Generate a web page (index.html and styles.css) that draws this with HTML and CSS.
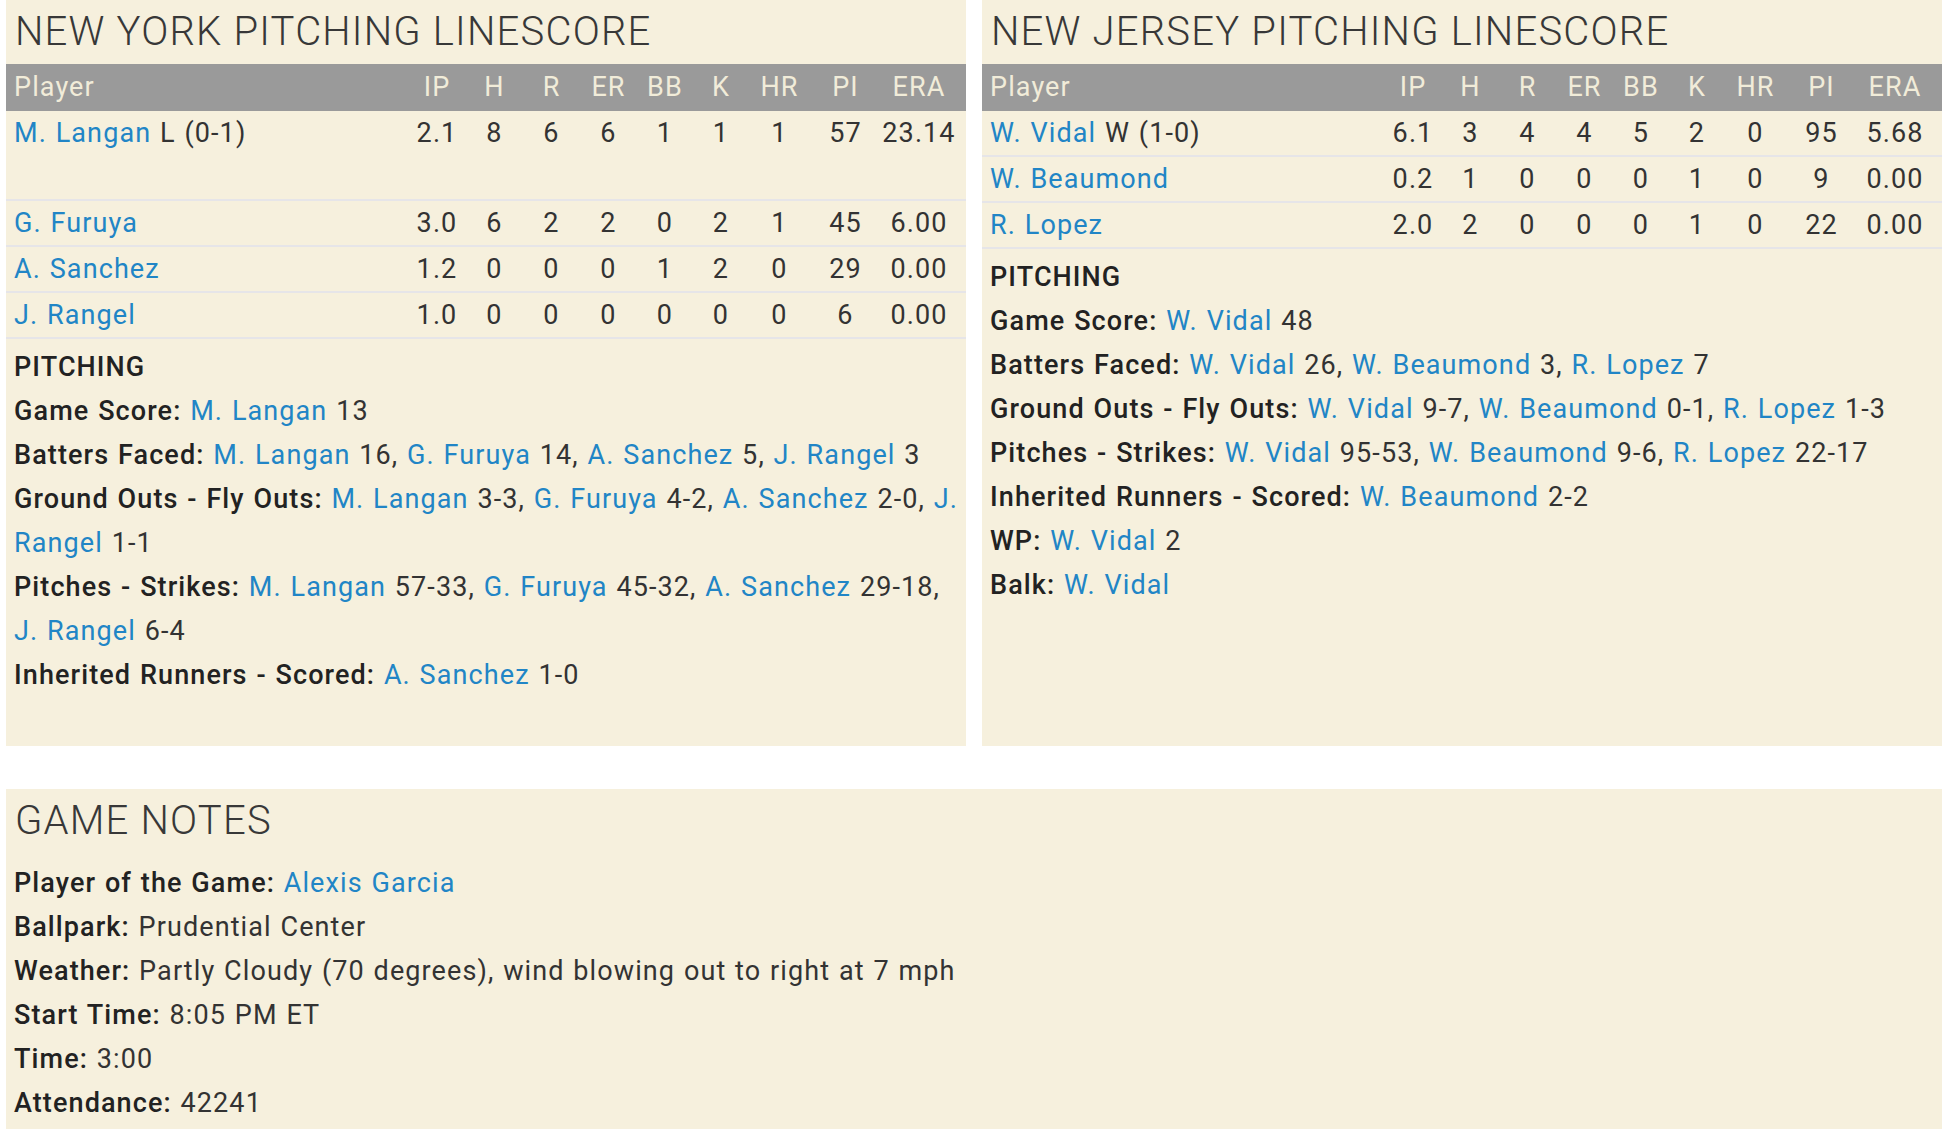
FILE: index.html
```html
<!DOCTYPE html>
<html lang="en">
<head>
<meta charset="utf-8">
<title>Pitching Linescore</title>
<link rel="stylesheet" href="styles.css">
</head>
<body>
<div class="top-row">
  <section class="panel">
    <h2 class="panel-title">NEW YORK PITCHING LINESCORE</h2>
    <table class="linescore">
      <colgroup>
        <col class="c-player"><col class="c-ip"><col class="c-h"><col class="c-r"><col class="c-er"><col class="c-bb"><col class="c-k"><col class="c-hr"><col class="c-pi"><col class="c-era">
      </colgroup>
      <thead>
        <tr><th class="player">Player</th><th>IP</th><th>H</th><th>R</th><th>ER</th><th>BB</th><th>K</th><th>HR</th><th>PI</th><th class="last">ERA</th></tr>
      </thead>
      <tbody>
        <tr class="tall"><td class="player"><a href="#">M. Langan</a> L (0-1)</td><td>2.1</td><td>8</td><td>6</td><td>6</td><td>1</td><td>1</td><td>1</td><td>57</td><td class="last">23.14</td></tr>
        <tr><td class="player"><a href="#">G. Furuya</a></td><td>3.0</td><td>6</td><td>2</td><td>2</td><td>0</td><td>2</td><td>1</td><td>45</td><td class="last">6.00</td></tr>
        <tr><td class="player"><a href="#">A. Sanchez</a></td><td>1.2</td><td>0</td><td>0</td><td>0</td><td>1</td><td>2</td><td>0</td><td>29</td><td class="last">0.00</td></tr>
        <tr><td class="player"><a href="#">J. Rangel</a></td><td>1.0</td><td>0</td><td>0</td><td>0</td><td>0</td><td>0</td><td>0</td><td>6</td><td class="last">0.00</td></tr>
      </tbody>
    </table>
    <div class="details">
      <div class="details-head">PITCHING</div>
      <div class="line"><span class="label">Game Score:</span> <a href="#">M. Langan</a> 13</div>
      <div class="line"><span class="label">Batters Faced:</span> <a href="#">M. Langan</a> 16, <a href="#">G. Furuya</a> 14, <a href="#">A. Sanchez</a> 5, <a href="#">J. Rangel</a> 3</div>
      <div class="line"><span class="label">Ground Outs - Fly Outs:</span> <a href="#">M. Langan</a> 3-3, <a href="#">G. Furuya</a> 4-2, <a href="#">A. Sanchez</a> 2-0, <a href="#">J. Rangel</a> 1-1</div>
      <div class="line"><span class="label">Pitches - Strikes:</span> <a href="#">M. Langan</a> 57-33, <a href="#">G. Furuya</a> 45-32, <a href="#">A. Sanchez</a> 29-18, <a href="#">J. Rangel</a> 6-4</div>
      <div class="line"><span class="label">Inherited Runners - Scored:</span> <a href="#">A. Sanchez</a> 1-0</div>
    </div>
  </section>
  <section class="panel">
    <h2 class="panel-title">NEW JERSEY PITCHING LINESCORE</h2>
    <table class="linescore">
      <colgroup>
        <col class="c-player"><col class="c-ip"><col class="c-h"><col class="c-r"><col class="c-er"><col class="c-bb"><col class="c-k"><col class="c-hr"><col class="c-pi"><col class="c-era">
      </colgroup>
      <thead>
        <tr><th class="player">Player</th><th>IP</th><th>H</th><th>R</th><th>ER</th><th>BB</th><th>K</th><th>HR</th><th>PI</th><th class="last">ERA</th></tr>
      </thead>
      <tbody>
        <tr><td class="player"><a href="#">W. Vidal</a> W (1-0)</td><td>6.1</td><td>3</td><td>4</td><td>4</td><td>5</td><td>2</td><td>0</td><td>95</td><td class="last">5.68</td></tr>
        <tr><td class="player"><a href="#">W. Beaumond</a></td><td>0.2</td><td>1</td><td>0</td><td>0</td><td>0</td><td>1</td><td>0</td><td>9</td><td class="last">0.00</td></tr>
        <tr><td class="player"><a href="#">R. Lopez</a></td><td>2.0</td><td>2</td><td>0</td><td>0</td><td>0</td><td>1</td><td>0</td><td>22</td><td class="last">0.00</td></tr>
      </tbody>
    </table>
    <div class="details">
      <div class="details-head">PITCHING</div>
      <div class="line"><span class="label">Game Score:</span> <a href="#">W. Vidal</a> 48</div>
      <div class="line"><span class="label">Batters Faced:</span> <a href="#">W. Vidal</a> 26, <a href="#">W. Beaumond</a> 3, <a href="#">R. Lopez</a> 7</div>
      <div class="line"><span class="label">Ground Outs - Fly Outs:</span> <a href="#">W. Vidal</a> 9-7, <a href="#">W. Beaumond</a> 0-1, <a href="#">R. Lopez</a> 1-3</div>
      <div class="line"><span class="label">Pitches - Strikes:</span> <a href="#">W. Vidal</a> 95-53, <a href="#">W. Beaumond</a> 9-6, <a href="#">R. Lopez</a> 22-17</div>
      <div class="line"><span class="label">Inherited Runners - Scored:</span> <a href="#">W. Beaumond</a> 2-2</div>
      <div class="line"><span class="label">WP:</span> <a href="#">W. Vidal</a> 2</div>
      <div class="line"><span class="label">Balk:</span> <a href="#">W. Vidal</a></div>
    </div>
  </section>
</div>
<section class="panel notes">
  <h2 class="panel-title">GAME NOTES</h2>
  <div class="notes-body">
    <div class="line"><span class="label">Player of the Game:</span> <a href="#">Alexis Garcia</a></div>
    <div class="line"><span class="label">Ballpark:</span> Prudential Center</div>
    <div class="line"><span class="label">Weather:</span> Partly Cloudy (70 degrees), wind blowing out to right at 7 mph</div>
    <div class="line"><span class="label">Start Time:</span> 8:05 PM ET</div>
    <div class="line"><span class="label">Time:</span> 3:00</div>
    <div class="line"><span class="label">Attendance:</span> 42241</div>
  </div>
</section>
</body>
</html>
```

FILE: styles.css
```css
html, body {
  margin: 0;
  padding: 0;
  background: #ffffff;
}
body {
  padding: 0 6px;
  font-family: Roboto, "Noto Sans", "Liberation Sans", sans-serif;
  font-size: 27px;
  letter-spacing: 1.1px;
  word-spacing: 1px;
  color: #333333;
}
a {
  color: #2185c6;
  text-decoration: none;
}
.top-row {
  display: flex;
  gap: 16px;
}
.panel {
  flex: 1 1 0;
  background: #f6f0dd;
  padding-bottom: 49px;
}
.panel-title {
  margin: 0;
  padding-left: 9px;
  font-size: 40px;
  font-weight: 300;
  letter-spacing: 1.2px;
  word-spacing: 0;
  line-height: 64px;
  color: #383838;
}
.linescore {
  width: 100%;
  border-collapse: collapse;
  table-layout: fixed;
}
.c-ip { width: 58px; }
.c-h { width: 57px; }
.c-r { width: 57px; }
.c-er { width: 57px; }
.c-bb { width: 56px; }
.c-k { width: 56px; }
.c-hr { width: 61px; }
.c-pi { width: 71px; }
.c-era { width: 85px; }
.linescore th {
  background: #9a9a9a;
  color: #f1ecd9;
  font-weight: 400;
  line-height: 47px;
  padding: 0;
  text-align: center;
  white-space: nowrap;
}
.linescore td {
  padding: 0;
  line-height: 44px;
  text-align: center;
  border-bottom: 2px solid #e6e5e8;
  white-space: nowrap;
  vertical-align: top;
}
.linescore .player {
  text-align: left;
  padding-left: 8px;
}
.linescore .last {
  padding-right: 9px;
}
.linescore tr.tall td {
  height: 88px;
}
.details {
  padding: 6px 4px 0 8px;
}
.details-head {
  font-weight: 500;
  line-height: 44px;
  color: #222222;
}
.line {
  line-height: 44px;
}
.label {
  font-weight: 500;
  color: #222222;
}
.notes {
  margin-top: 43px;
  padding-bottom: 4px;
}
.notes-body {
  padding: 8px 4px 0 8px;
}
```
